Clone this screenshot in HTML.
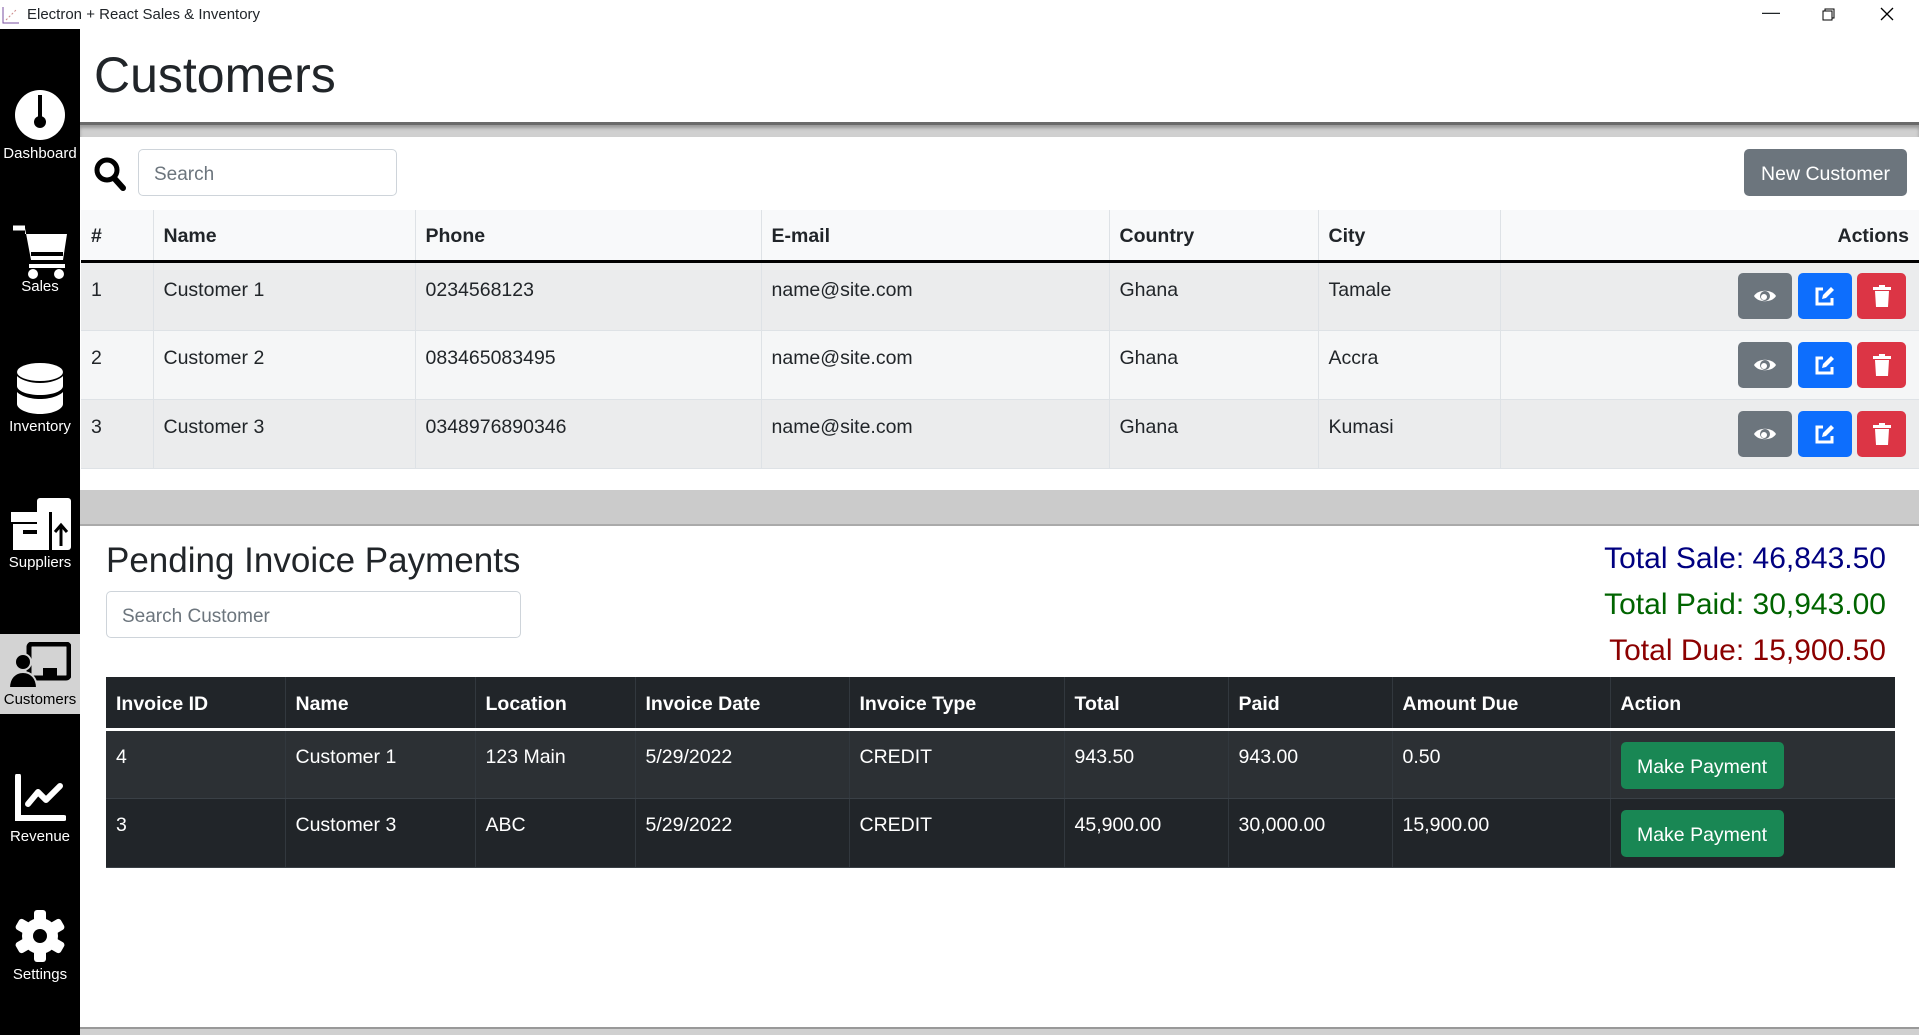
<!DOCTYPE html>
<html><head><meta charset="utf-8"><style>
*{box-sizing:border-box;margin:0;padding:0}
body{width:1919px;height:1035px;overflow:hidden;background:#fff;font-family:"Liberation Sans",sans-serif;color:#212529;position:relative}
.abs{position:absolute}
.tb{top:0;left:0;width:1919px;height:29px;background:#fff;font-size:15px;line-height:29px}
.side{top:29px;left:0;width:80px;height:1006px;background:#000}
.si{position:absolute;left:0;width:80px;text-align:center;color:#fff;font-size:15px}
.inp{border:1px solid #ced4da;border-radius:5px;background:#fff;color:#6c757d;font-size:19px;padding-left:15px;display:flex;align-items:center}
table{border-collapse:collapse;position:absolute;font-size:19.5px}
td,th{text-align:left;padding:0 10px;vertical-align:top}
.ct th{font-weight:bold;height:51px;vertical-align:middle;background:#f8f9fa;border-right:1px solid #dee2e6;border-bottom:3px solid #000}
.ct td{border-right:1px solid #dee2e6;border-bottom:1px solid #dee2e6;padding-top:16px}
.ct tr.o td{background:#ebeced}.ct tr.e td{background:#f5f6f7}
.btn{position:absolute;width:54px;height:46px;border-radius:5px;display:flex;align-items:center;justify-content:center}
.dt{background:#212529;color:#fff}
.dt th{height:52px;vertical-align:middle;border-right:1px solid #32383e;border-bottom:3px solid #fff}
.dt td{border-right:1px solid #32383e;padding-top:15px;height:69px;border-bottom:1px solid #3a4046}
.dt tr.o td{background:#2c3034}
.mp{background:#198754;color:#fff;font-size:19.5px;border-radius:5px;width:163px;height:47px;display:flex;align-items:center;justify-content:center;margin-top:-6px}
</style></head><body>
<div class="abs tb"><svg class="abs" style="left:2px;top:6px" width="18" height="18"><path d="M1 1V17H17" stroke="#7a4fa0" fill="none"/><path d="M4 14L14 4" stroke="#c88" stroke-dasharray="2 2"/></svg><span style="position:absolute;left:27px">Electron + React Sales &amp; Inventory</span>
<span style="position:absolute;left:1762px;top:-2px;font-size:18px">&#8212;</span>
<svg class="abs" style="left:1822px;top:8px" width="13" height="13"><rect x="1" y="3" width="9" height="9" fill="none" stroke="#000"/><path d="M3 3V1H12V10H10" fill="none" stroke="#000"/></svg>
<svg class="abs" style="left:1880px;top:7px" width="14" height="14"><path d="M1 1L13 13M13 1L1 13" stroke="#000" stroke-width="1.3"/></svg></div>
<div class="abs side">
<div class="si" style="top:60px"><svg width="52" height="52" viewBox="0 0 52 52"><circle cx="26" cy="26" r="25" fill="#fff"/><rect x="24" y="6" width="4" height="26" fill="#000"/><circle cx="26" cy="33" r="6" fill="#000"/></svg><div>Dashboard</div></div>
<div class="si" style="top:195px"><svg width="58" height="56" viewBox="0 0 58 56"><path d="M14 4L20 36H52L56 10H14Z" fill="#fff"/><path d="M2 4H14" stroke="#fff" stroke-width="5"/><rect x="20" y="28" width="32" height="4" fill="#000"/><rect x="18" y="40" width="36" height="4" fill="#fff"/><circle cx="22" cy="50" r="5" fill="#fff"/><circle cx="48" cy="50" r="5" fill="#fff"/></svg><div style="margin-top:-6px">Sales</div></div>
<div class="si" style="top:333px"><svg width="48" height="56" viewBox="0 0 48 56"><ellipse cx="24" cy="10" rx="23" ry="9" fill="#fff"/><path d="M1 14v10c0 5 10 9 23 9s23-4 23-9V14c-4 4-13 7-23 7S5 18 1 14z" fill="#fff"/><path d="M1 30v12c0 5 10 10 23 10s23-5 23-10V30c-4 4-13 7-23 7S5 34 1 30z" fill="#fff"/></svg><div style="margin-top:-4px">Inventory</div></div>
<div class="si" style="top:469px"><svg width="62" height="54" viewBox="0 0 62 54"><rect x="28" y="0" width="34" height="52" rx="3" fill="#fff"/><rect x="2" y="14" width="40" height="10" fill="#fff"/><rect x="4" y="26" width="36" height="26" fill="#fff"/><rect x="14" y="32" width="14" height="4" fill="#000"/><rect x="40" y="14" width="3" height="40" fill="#000"/><path d="M52 48V28M46 34L52 27L58 34" stroke="#000" stroke-width="3" fill="none"/></svg><div style="margin-top:-2px">Suppliers</div></div>
<div class="si" style="top:605px;height:80px;background:#d3d3d3;color:#000;padding-top:8px"><svg width="62" height="48" viewBox="0 0 62 48"><rect x="20" y="2" width="40" height="34" rx="3" fill="none" stroke="#000" stroke-width="5"/><rect x="34" y="26" width="14" height="12" fill="#000"/><circle cx="14" cy="20" r="8" fill="#000" stroke="#d3d3d3" stroke-width="2"/><path d="M0 46c0-10 6-16 14-16s14 6 14 16z" fill="#000" stroke="#d3d3d3" stroke-width="2"/></svg><div style="margin-top:-3px">Customers</div></div>
<div class="si" style="top:745px"><svg width="52" height="48" viewBox="0 0 52 48"><path d="M4 2V44H50" stroke="#fff" stroke-width="6" fill="none" stroke-linecap="round"/><path d="M14 30L24 18L32 26L46 12" stroke="#fff" stroke-width="6" fill="none" stroke-linecap="round" stroke-linejoin="round"/></svg><div style="margin-top:2px">Revenue</div></div>
<div class="si" style="top:881px"><svg width="52" height="52" viewBox="0 0 52 52"><g fill="#fff" transform="translate(26 26)"><circle r="18"/><rect x="-6" y="-26" width="12" height="52" rx="3"/><rect x="-6" y="-26" width="12" height="52" rx="3" transform="rotate(60)"/><rect x="-6" y="-26" width="12" height="52" rx="3" transform="rotate(120)"/></g><circle cx="26" cy="26" r="7" fill="#000"/></svg><div style="margin-top:0px">Settings</div></div>
</div>
<div class="abs" style="left:94px;top:46px;font-size:50px;color:#212529">Customers</div>
<div class="abs" style="left:80px;top:122px;width:1839px;height:15px;background:#d0d0d0;border-top:3px solid #6a6a6a;box-shadow:inset 0 3px 3px #999"></div>
<svg class="abs" style="left:94px;top:157px" width="32" height="34" viewBox="0 0 32 34"><circle cx="13" cy="13" r="10" fill="none" stroke="#000" stroke-width="5"/><path d="M20 21L29 31" stroke="#000" stroke-width="6" stroke-linecap="round"/></svg>
<div class="abs inp" style="left:138px;top:149px;width:259px;height:47px;padding-top:4px">Search</div>
<div class="abs" style="left:1744px;top:149px;width:163px;height:47px;background:#6c757d;color:#fff;border-radius:5px;font-size:19.5px;display:flex;align-items:center;justify-content:center;padding-top:4px">New Customer</div>
<table class="ct" style="left:81px;top:210px;width:1838px">
<tr><th style="width:72px;padding-top:4px">#</th><th style="width:262px;padding-top:4px">Name</th><th style="width:346px;padding-top:4px">Phone</th><th style="width:348px;padding-top:4px">E-mail</th><th style="width:209px;padding-top:4px">Country</th><th style="width:182px;padding-top:4px">City</th><th style="text-align:right;border-right:0;padding-top:4px">Actions</th></tr>
<tr class="o" style="height:69px"><td>1</td><td>Customer 1</td><td>0234568123</td><td>name@site.com</td><td>Ghana</td><td>Tamale</td><td style="border-right:0"></td></tr>
<tr class="e" style="height:69px"><td>2</td><td>Customer 2</td><td>083465083495</td><td>name@site.com</td><td>Ghana</td><td>Accra</td><td style="border-right:0"></td></tr>
<tr class="o" style="height:69px"><td>3</td><td>Customer 3</td><td>0348976890346</td><td>name@site.com</td><td>Ghana</td><td>Kumasi</td><td style="border-right:0"></td></tr>
</table>
<div id="btns"></div>
<div class="abs" style="left:80px;top:490px;width:1839px;height:36px;background:#cbcbcb;border-bottom:2px solid #aaa"></div>
<div class="abs" style="left:106px;top:541px;font-size:35px">Pending Invoice Payments</div>
<div class="abs inp" style="left:106px;top:591px;width:415px;height:47px;padding-top:4px">Search Customer</div>
<div class="abs" style="right:33px;top:536px;font-size:30px;text-align:right;line-height:46px"><div style="color:#000080">Total Sale: 46,843.50</div><div style="color:#006400">Total Paid: 30,943.00</div><div style="color:#8b0000">Total Due: 15,900.50</div></div>
<table class="dt" style="left:106px;top:677px;width:1789px">
<tr><th style="width:179px;padding-top:4px">Invoice ID</th><th style="width:190px;padding-top:4px">Name</th><th style="width:160px;padding-top:4px">Location</th><th style="width:214px;padding-top:4px">Invoice Date</th><th style="width:215px;padding-top:4px">Invoice Type</th><th style="width:164px;padding-top:4px">Total</th><th style="width:164px;padding-top:4px">Paid</th><th style="width:218px;padding-top:4px">Amount Due</th><th style="border-right:0;padding-top:4px">Action</th></tr>
<tr class="o"><td>4</td><td>Customer 1</td><td>123 Main</td><td>5/29/2022</td><td>CREDIT</td><td>943.50</td><td>943.00</td><td>0.50</td><td style="border-right:0"><div class="mp" style="margin-top:-4px;padding-top:4px">Make Payment</div></td></tr>
<tr><td>3</td><td>Customer 3</td><td>ABC</td><td>5/29/2022</td><td>CREDIT</td><td>45,900.00</td><td>30,000.00</td><td>15,900.00</td><td style="border-right:0"><div class="mp" style="margin-top:-4px;padding-top:4px">Make Payment</div></td></tr>
</table>
<div class="abs" style="left:80px;top:1027px;width:1839px;height:8px;background:#d0d0d0;border-top:2px solid #999"></div>
<script>
var h='';[273,342,411].forEach(function(y){
h+='<div class="btn" style="left:1738px;top:'+y+'px;background:#6c757d"><svg width="24" height="18" viewBox="0 0 24 18"><path d="M1 9C5 2 19 2 23 9C19 16 5 16 1 9Z" fill="#fff"/><circle cx="12" cy="9" r="5" fill="#6c757d"/><circle cx="11" cy="10" r="3" fill="#fff"/></svg></div>';
h+='<div class="btn" style="left:1798px;top:'+y+'px;background:#0d6efd"><svg width="22" height="22" viewBox="0 0 22 22"><path d="M9 4H3V19H18V13" fill="none" stroke="#fff" stroke-width="3"/><path d="M8 14L9 10L17 2L20 5L12 13Z" fill="#fff"/></svg></div>';
h+='<div class="btn" style="left:1857px;top:'+y+'px;width:49px;background:#dc3545"><svg width="18" height="22" viewBox="0 0 18 22"><rect x="0" y="2" width="18" height="3" fill="#fff"/><rect x="6" y="0" width="6" height="3" fill="#fff"/><path d="M2 6H16L15 22H3Z" fill="#fff"/></svg></div>';});
document.getElementById('btns').innerHTML=h;
</script>
</body></html>
